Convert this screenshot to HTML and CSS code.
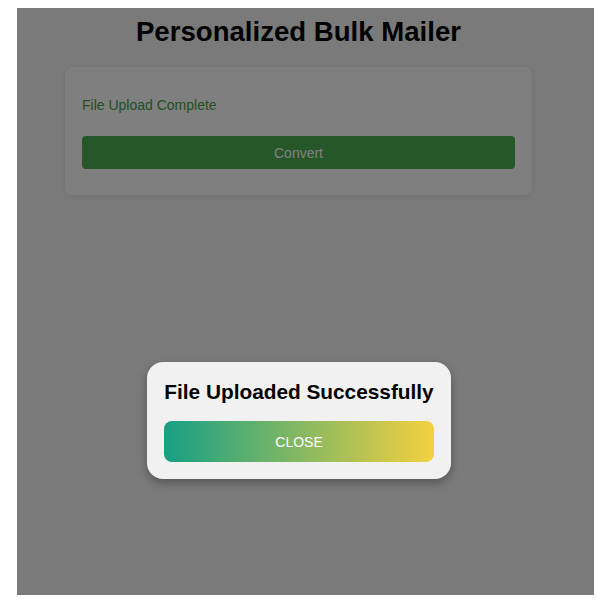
FILE: index.html
```html
<!DOCTYPE html>
<html lang="en">
<head>
<meta charset="utf-8">
<title>Personalized Bulk Mailer</title>
<link rel="stylesheet" href="styles.css">
</head>
<body>
<div class="app">
  <div class="page">
    <h1 class="title">Personalized Bulk Mailer</h1>
    <div class="card">
      <p class="status">File Upload Complete</p>
      <button class="convert">Convert</button>
    </div>
  </div>
  <div class="overlay">
    <div class="modal">
      <h2 class="modal-title">File Uploaded Successfully</h2>
      <button class="close">CLOSE</button>
    </div>
  </div>
</div>
</body>
</html>
```
FILE: styles.css
```css
html, body {
  margin: 0;
  background: #fff;
}
body {
  padding: 8px 14px 9px 17px;
}
.app {
  position: relative;
  height: 587px;
  background: #f5f5f5;
  font-family: "Liberation Sans", Arial, sans-serif;
}
.page {
  width: 563px;
  display: flex;
  flex-direction: column;
  align-items: center;
  padding-top: 8px;
}
.title {
  margin: 0;
  font-size: 27.6px;
  line-height: 32px;
  font-weight: bold;
  color: #000;
}
.card {
  margin-top: 19px;
  width: 467px;
  height: 128px;
  box-sizing: border-box;
  padding: 16px 17px 26px;
  background: #fff;
  border-radius: 8px;
  box-shadow: 0 2px 6px rgba(0, 0, 0, 0.08);
}
.status {
  margin: 14px 0 23px;
  font-size: 14px;
  line-height: 16px;
  color: #43a047;
}
.convert {
  display: block;
  width: 100%;
  height: 33px;
  border: none;
  border-radius: 4px;
  background: #4caf50;
  color: #fff;
  font-family: "Liberation Sans", Arial, sans-serif;
  font-size: 14px;
}
.overlay {
  position: absolute;
  inset: 0;
  background: rgba(0, 0, 0, 0.5);
}
.modal {
  position: absolute;
  left: 130px;
  top: 354px;
  width: 304px;
  box-sizing: border-box;
  padding: 18px 17px 17px;
  background: #f1f1f1;
  border-radius: 16px;
  box-shadow: 0 4px 10px rgba(0, 0, 0, 0.3);
}
.modal-title {
  margin: 0 0 18px;
  font-size: 20.8px;
  line-height: 23px;
  font-weight: bold;
  text-align: center;
  white-space: nowrap;
  color: #000;
}
.close {
  display: block;
  width: 100%;
  height: 41px;
  border: none;
  border-radius: 8px;
  background: linear-gradient(to right, #16a085, #f4d03f);
  color: #fff;
  font-family: "Liberation Sans", Arial, sans-serif;
  font-size: 14px;
}
```
